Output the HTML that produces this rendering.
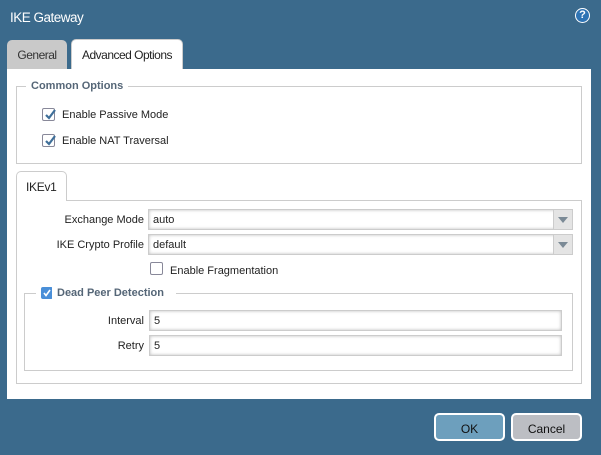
<!DOCTYPE html>
<html><head><style>
*{box-sizing:border-box;margin:0;padding:0}
body{width:601px;height:455px;background:#3b6a8c;font-family:"Liberation Sans",sans-serif;font-size:11px;color:#222;position:relative;overflow:hidden}
.a{position:absolute}
.title{left:10px;top:10px;color:#fff;font-size:13.5px;letter-spacing:-0.5px}
.tab{top:40px;height:30px;border-radius:5px 5px 0 0;font-size:12px;padding-top:8px;text-align:center;letter-spacing:-0.5px}
.panel{left:7px;top:69px;width:584px;height:330px;background:#fff}
.fs{border:1px solid #ccc}
.leg{background:#fff;padding:0 5px;font-weight:bold;color:#556677;font-size:11px}
.cb{width:13px;height:13px;border:1px solid #889;border-radius:2px;background:#fff}
.cb svg{position:absolute;left:0;top:-2px}
.lbl{font-size:11px;text-align:right}
.inp{height:21px;border:1px solid #ccc;box-shadow:inset 0 0 3px #bbb;background:#fff;padding:4px 4px;font-size:11px}
.arr{right:0;top:0;width:19px;height:19px;background:#e4e4e4;border-left:1px solid #ccc}
.arr:after{content:"";position:absolute;left:4px;top:7px;border-left:5px solid transparent;border-right:5px solid transparent;border-top:6px solid #7b8a96}
.btn{top:413px;width:71px;height:28px;border:2px solid #fff;border-radius:5px;text-align:center;padding-top:7px;font-size:12px;color:#111}
</style></head><body>
<div class="a title">IKE Gateway</div>
<div class="a" style="left:575px;top:8px;width:15px;height:15px;border-radius:50%;background:#2f74b4;border:1.5px solid #fff;color:#fff;font-weight:bold;font-size:11px;text-align:center;line-height:12px">?</div>
<div class="a tab" style="left:7px;width:60px;background:#c9c9c9;color:#333">General</div>
<div class="a tab" style="left:71px;top:39px;width:112px;height:31px;background:#fff;border:1px solid #ccc;border-bottom:none">Advanced Options</div>
<div class="a panel"></div>
<div class="a fs" style="left:16px;top:86px;width:566px;height:78px"></div>
<div class="a leg" style="left:26px;top:80px">Common Options</div>
<div class="a cb" style="left:42px;top:108px"><svg width="15" height="15"><path d="M3 8 L6 11 L12 3" stroke="#3f6f99" stroke-width="2.2" fill="none"/></svg></div>
<div class="a" style="left:62px;top:109px">Enable Passive Mode</div>
<div class="a cb" style="left:42px;top:134px"><svg width="15" height="15"><path d="M3 8 L6 11 L12 3" stroke="#3f6f99" stroke-width="2.2" fill="none"/></svg></div>
<div class="a" style="left:62px;top:135px">Enable NAT Traversal</div>
<div class="a fs" style="left:16px;top:200px;width:566px;height:184px"></div>
<div class="a" style="left:16px;top:171px;width:51px;height:30px;background:#fff;border:1px solid #ccc;border-bottom:none;border-radius:5px 5px 0 0;font-size:12px;padding:8px 0 0 9px;letter-spacing:-0.3px">IKEv1</div>
<div class="a lbl" style="left:40px;width:104px;top:214px">Exchange Mode</div>
<div class="a inp" style="left:148px;top:209px;width:425px">auto<div class="a arr"></div></div>
<div class="a lbl" style="left:40px;width:104px;top:239px">IKE Crypto Profile</div>
<div class="a inp" style="left:148px;top:234px;width:425px">default<div class="a arr"></div></div>
<div class="a cb" style="left:150px;top:262px"></div>
<div class="a" style="left:170px;top:265px">Enable Fragmentation</div>
<div class="a fs" style="left:24px;top:293px;width:549px;height:78px"></div>
<div class="a" style="left:36px;top:286px;width:140px;height:14px;background:#fff"></div>
<div class="a" style="left:41px;top:287px;width:12px;height:12px;border-radius:2px;background:#4a8fd8"><svg width="12" height="12" style="position:absolute;left:0;top:0"><path d="M3 6 L5 8.5 L9 3" stroke="#fff" stroke-width="1.6" fill="none"/></svg></div>
<div class="a leg" style="left:52px;top:287px">Dead Peer Detection</div>
<div class="a lbl" style="left:60px;width:84px;top:315px">Interval</div>
<div class="a inp" style="left:149px;top:310px;width:413px">5</div>
<div class="a lbl" style="left:60px;width:84px;top:340px">Retry</div>
<div class="a inp" style="left:149px;top:335px;width:413px">5</div>
<div class="a btn" style="left:434px;background:#6d9fbd">OK</div>
<div class="a btn" style="left:511px;background:#bcbec3">Cancel</div>
</body></html>
